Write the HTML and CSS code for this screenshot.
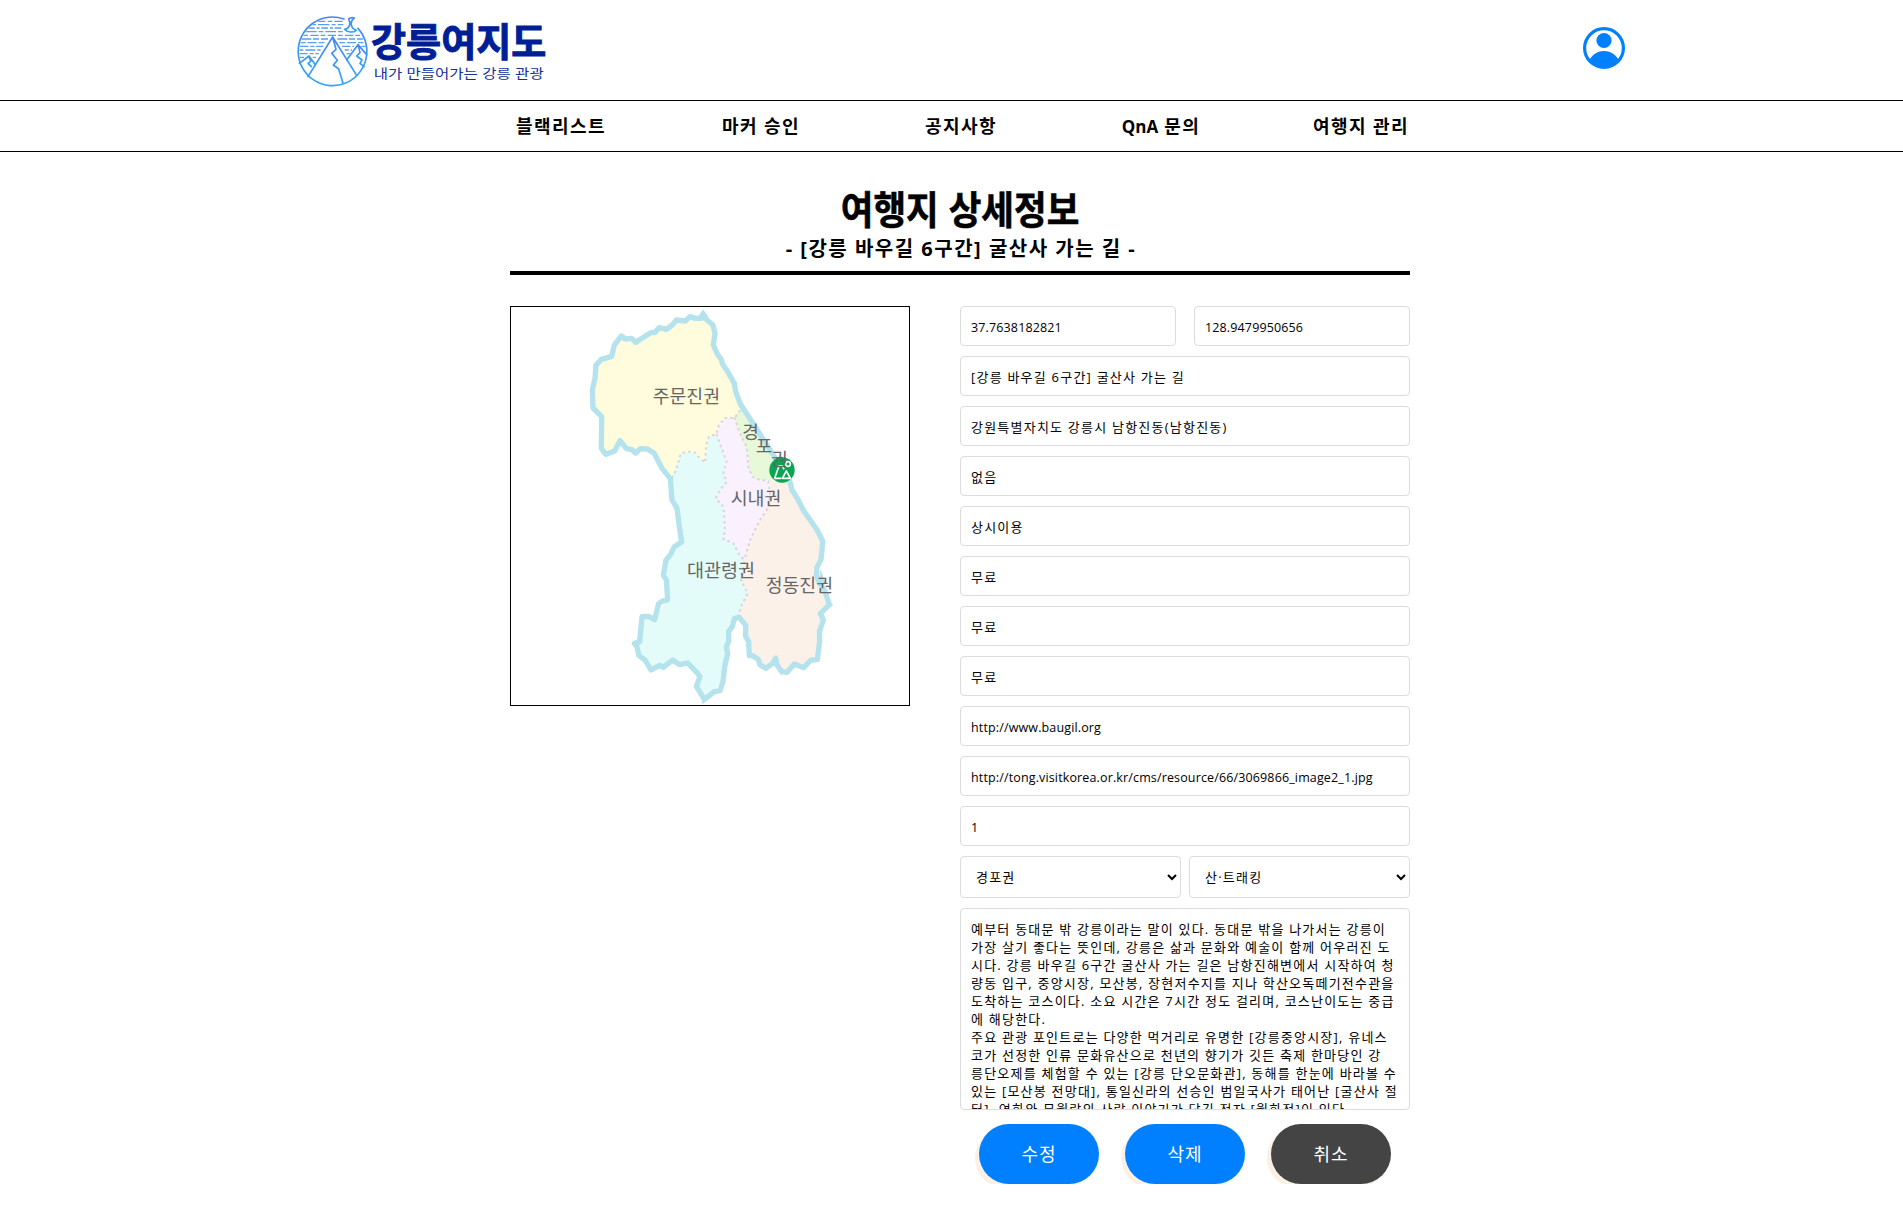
FILE: index.html
```html
<!DOCTYPE html>
<html lang="ko">
<head>
<meta charset="utf-8">
<title>강릉여지도</title>
<link rel="stylesheet" href="styles.css">
</head>
<body>
<header class="header">
  <svg class="logo" viewBox="0 0 870 300" role="img" aria-label="강릉여지도">
    <defs>
      <linearGradient id="ring" x1="0" y1="0" x2="0" y2="1"><stop offset="0" stop-color="#4a86ee"/><stop offset="1" stop-color="#2ea5fb"/></linearGradient>
      <clipPath id="disc"><circle cx="158" cy="154" r="100"/></clipPath>
    </defs>
    <g clip-path="url(#disc)" fill="none" stroke="#5a9df5" stroke-width="4">
      <path stroke-dasharray="26 7 14 6" d="M110 64H188"/>
      <path stroke-dasharray="12 6 34 7" d="M96 74H190"/>
      <path stroke-dasharray="20 6 9 5" d="M84 84H186"/>
      <path stroke-dasharray="32 6 14 6" d="M78 95H190"/>
      <path stroke-dasharray="14 7 25 6" d="M70 106H246"/>
      <path stroke-dasharray="30 5 18 6" d="M64 117H144M172 117H250"/>
      <path stroke-dasharray="17 6 27 6" d="M60 128H138M178 128H256"/>
      <path stroke-dasharray="25 6 12 5" d="M60 139H130M186 139H222M244 139H260"/>
      <path stroke-dasharray="12 6 30 6" d="M58 150H122M194 150H216"/>
      <path stroke-dasharray="25 6 12 5" d="M58 161H116M200 161H210"/>
      <path stroke-dasharray="14 6 20 5" d="M58 172H78M98 172H108"/>
    </g>
    <g fill="none" stroke="url(#ring)" stroke-width="5" stroke-linejoin="round" stroke-linecap="round">
      <path d="M192 57A103 103 0 1 0 234 85"/>
      <path d="M223 54C208 66 212 84 229 91C218 99 203 97 194 88C207 86 214 73 206 57C211 53 217 52 223 54Z"/>
      <path d="M84 230L158 111L230 226M158 111L168 148L155 160L172 181L160 195L176 207L189 250"/>
      <path d="M58 190L87 168L106 194M87 168L92 184L84 190L94 200M200 180L234 134L260 164M234 134L240 158L230 168L246 180L240 190L252 200"/>
    </g>
    <text class="logo-name" x="273" y="169" textLength="526" lengthAdjust="spacingAndGlyphs">강릉여지도</text>
    <text class="logo-tag" x="281" y="233" textLength="510" lengthAdjust="spacingAndGlyphs">내가 만들어가는 강릉 관광</text>
  </svg>
  <svg class="profile" viewBox="0 0 42 42" role="img" aria-label="프로필">
    <defs><clipPath id="face"><circle cx="21" cy="21" r="20"/></clipPath></defs>
    <circle cx="21" cy="21" r="19.4" fill="#fff" stroke="#0080ff" stroke-width="3.2"/>
    <circle cx="21" cy="13.5" r="7.6" fill="#0080ff"/>
    <path clip-path="url(#face)" fill="#0080ff" d="M5 36C8 28 14 24 21 24S34 28 37 36L30 42H12Z"/>
  </svg>
</header>
<nav class="nav">
  <a>블랙리스트</a><a>마커 승인</a><a>공지사항</a><a><span>QnA</span> 문의</a><a>여행지 관리</a>
</nav>
<main class="main">
  <div class="heading">
    <h1><span>여행지 상세정보</span></h1>
    <h2>- [강릉 바우길 6구간] 굴산사 가는 길 -</h2>
  </div>
  <div class="content">
    <div class="map">
      <svg viewBox="18 21 1194 1194">
        <path fill="#fffbdd" d="M594 42L627 75L625 135L650 185L690 255L708 320L690 350L650 360L634 405L612 410L600 488L560 455L528 460L500 535L445 455L392 460L345 422L302 465L290 450V350L262 315L272 190L322 165L350 105L392 125L465 82L515 60Z"/>
        <path fill="#e3fcfa" d="M500 535L528 460L560 455L600 488L612 410L634 402L665 480L655 520L665 545L634 590L655 620L657 715L690 735L718 780L708 840L728 880L700 945L670 1000L655 1145L598 1200L575 1155L585 1130L548 1088L505 1080L440 1110L400 1060L390 1030L412 950L450 955L488 900L478 830L485 780L530 725L500 590Z"/>
        <path fill="#f9f1fe" d="M634 402L655 358L688 352L730 470L742 530L790 545L795 612L765 660L735 720L718 785L685 730L655 715L657 625L632 595L665 545L655 520L665 485Z"/>
        <path fill="#e7f9d8" d="M708 325L688 352L705 400L730 470L735 515L750 537L795 543L840 520L800 465Z"/>
        <path fill="#fcf1e9" d="M795 543L855 545L885 600L955 720L950 770L935 800L945 850L973 915L950 945L940 1080L890 1100L830 1115L810 1080L780 1105L733 1065L728 1000L700 945L728 880L708 840L718 780L735 720L765 660L792 620Z"/>
        <g fill="none" stroke="#d8d6da" stroke-width="6" stroke-dasharray="8 9">
          <path d="M500 535C520 505 518 485 528 460L552 455L570 458L580 470L600 488L604 435L612 410L634 402L642 375L660 354H688L708 328"/>
          <path d="M634 402L648 440L665 485L655 520L665 545L645 570L632 595L655 620L660 690L655 717L685 730L703 765L718 780L708 840L728 880L710 915L700 945"/>
          <path d="M688 352L705 400L725 440L730 500L742 530L760 538L790 543L795 580L792 620L765 660L735 720L718 780"/>
        </g>
        <path fill="none" stroke="#b4e3ed" stroke-width="16" stroke-linejoin="round" d="M594 42L605 59L624 75L630 100L625 135L638 164L649 178L652 191L666 212L688 250L692 274L706 312L745 372L798 454L855 545L861 570L875 592L896 632L935 688L953 723L950 760L948 778L936 802L934 827L944 850L959 872L965 889L973 914L946 941L955 960L943 995L944 1023L937 1079L918 1080L896 1103L868 1092L846 1117L829 1114L816 1095L812 1074L803 1090L782 1105L765 1094L759 1077L742 1067H733L731 1025L722 1009V976L703 952L688 956L682 980L671 994V1025L664 1041L668 1060L659 1100L654 1145L645 1172L628 1175L598 1198L574 1159L585 1130L576 1118L548 1089L523 1094L503 1080L475 1102L464 1096L438 1110L420 1080L402 1067L396 1041L388 1030L404 1026L411 950L430 949L449 959L461 911L471 904L488 899L484 839L475 826L483 780L497 763L508 740L530 726L523 680L516 625L501 600L496 536L471 505L447 459L427 447L406 446L392 459L381 449L364 446L345 422L329 453L302 463L289 445L290 350L264 324L262 270L270 234L273 196L289 178L320 169L328 135L349 108L361 117L380 115L392 127L437 98L450 97L463 83L484 88L502 75L514 60L541 63L555 50L571 55L590 55Z"/>
        <path fill="#b4e3ed" d="M594 28L610 50H580ZM946 808L962 850L940 860ZM969 900L985 915L955 935ZM590 1190L592 1213L612 1198ZM825 1105L827 1127L840 1115ZM265 205V195L278 185Z"/>
        <g class="marker">
          <circle cx="831" cy="510" r="38" fill="#0aa553"/>
          <g fill="none" stroke="#fff" stroke-width="5" stroke-linejoin="round">
            <path d="M829 535H809L822 498H832L837 508M832 535L844 513L856 535Z"/>
            <circle cx="849" cy="492" r="7"/>
          </g>
        </g>
        <g class="map-label">
          <text x="443" y="308" textLength="202" lengthAdjust="spacingAndGlyphs">주문진권</text>
          <text x="712" y="418">경</text><text x="752" y="459">포</text><text x="799" y="499">권</text>
          <text x="677" y="616" textLength="152" lengthAdjust="spacingAndGlyphs">시내권</text>
          <text x="546" y="832" textLength="204" lengthAdjust="spacingAndGlyphs">대관령권</text>
          <text x="782" y="877" textLength="202" lengthAdjust="spacingAndGlyphs">정동진권</text>
        </g>
      </svg>
    </div>
    <form class="form">
      <div class="pair"><input class="latin" value="37.7638182821"><input class="latin" value="128.9479950656"></div>
      <input value="[강릉 바우길 6구간] 굴산사 가는 길">
      <input value="강원특별자치도 강릉시 남항진동(남항진동)">
      <input value="없음">
      <input value="상시이용">
      <input value="무료">
      <input value="무료">
      <input value="무료">
      <input class="latin" value="http://www.baugil.org">
      <input class="latin" value="http://tong.visitkorea.or.kr/cms/resource/66/3069866_image2_1.jpg">
      <input class="latin" value="1">
      <div class="selects">
        <select><option>경포권</option></select>
        <select><option>산·트래킹</option></select>
      </div>
      <textarea>예부터 동대문 밖 강릉이라는 말이 있다. 동대문 밖을 나가서는 강릉이
가장 살기 좋다는 뜻인데, 강릉은 삶과 문화와 예술이 함께 어우러진 도
시다. 강릉 바우길 6구간 굴산사 가는 길은 남항진해변에서 시작하여 청
량동 입구, 중앙시장, 모산봉, 장현저수지를 지나 학산오독떼기전수관을
도착하는 코스이다. 소요 시간은 7시간 정도 걸리며, 코스난이도는 중급
에 해당한다.
주요 관광 포인트로는 다양한 먹거리로 유명한 [강릉중앙시장], 유네스
코가 선정한 인류 문화유산으로 천년의 향기가 깃든 축제 한마당인 강
릉단오제를 체험할 수 있는 [강릉 단오문화관], 동해를 한눈에 바라볼 수
있는 [모산봉 전망대], 통일신라의 선승인 범일국사가 태어난 [굴산사 절
터], 연화와 무월랑의 사랑 이야기가 담긴 정자 [월화정]이 있다.</textarea>
      <div class="actions">
        <button type="button">수정</button><button type="button">삭제</button><button type="button" class="cancel">취소</button>
      </div>
    </form>
  </div>
</main>
</body>
</html>
```
FILE: styles.css
```css
* { box-sizing: border-box; }
html { overflow: hidden; }
body {
  width: 1920px;
  margin: 0;
  background: #fff;
  color: #000;
  font-family: "Open Sans", "Noto Sans CJK KR", sans-serif;
}
.header {
  display: flex;
  justify-content: space-between;
  align-items: flex-start;
  height: 100px;
  padding: 0 295px 0 280px;
}
.logo { width: 290px; height: 100px; }
.logo-name { font: 700 115px "Noto Sans CJK KR", sans-serif; fill: #001e96; stroke: #001e96; stroke-width: 3px; }
.logo-tag { font: 400 39px "Noto Sans CJK KR", sans-serif; fill: #14319c; }
.profile { width: 42px; height: 42px; margin-top: 27px; }
.nav {
  display: flex;
  justify-content: center;
  align-items: center;
  height: 52px;
  padding: 0 0 2px 2px;
  border-top: 1px solid #000;
  border-bottom: 1px solid #000;
}
.nav a {
  width: 200px;
  text-align: center;
  font-size: 18px;
  font-weight: 700;
  letter-spacing: 1.4px;
}
.nav span { font-size: 17px; letter-spacing: 0; }
.main { width: 900px; margin: 0 auto; }
.heading {
  height: 123px;
  border-bottom: 4px solid #000;
  text-align: center;
}
h1 { margin: 0; padding-top: 33px; font: 700 39px/44px "Noto Sans CJK KR", sans-serif; }
h1 span { display: inline-block; transform: scaleX(.91); -webkit-text-stroke: .6px #000; }
h2 { margin: 8px 0 0; padding-left: 2px; font-size: 20px; line-height: 24px; font-weight: 700; letter-spacing: 1.5px; }
.content { display: flex; justify-content: space-between; align-items: flex-start; padding-top: 31px; }
.map { width: 400px; height: 400px; border: 1px solid #000; }
.map svg { display: block; width: 398px; height: 398px; }
.map-label { font: 400 54px "Noto Sans CJK KR", sans-serif; fill: #666; }
.form { display: flex; flex-direction: column; gap: 10px; width: 450px; }
.form input, .form select, .form textarea {
  border: 1px solid #dcdcdc;
  border-radius: 4px;
  background: #fff;
  color: #000;
  font: 400 13px "Open Sans", "Noto Sans CJK KR", sans-serif;
  letter-spacing: 1.22px;
  outline: 0;
}
.form input { width: 100%; height: 40px; padding: 1px 10px; }
.form input.latin { padding-top: 3px; font-size: 12.5px; letter-spacing: .14px; }
.pair { display: grid; grid-template-columns: 216px 216px; justify-content: space-between; }
.selects { display: grid; grid-template-columns: 221px 221px; justify-content: space-between; }
.form select { height: 42px; padding: 0 0 0 11px; }
.form textarea {
  display: block;
  height: 202px;
  padding: 11px 10px;
  line-height: 18px;
  white-space: pre;
  overflow: hidden;
  resize: none;
}
.actions { display: flex; justify-content: center; gap: 26px; padding-top: 4px; }
.actions button {
  width: 120px;
  height: 60px;
  padding: 0 0 2px;
  border: 0;
  border-radius: 30px;
  background: #0080ff;
  box-shadow: -4px 4px 0 #fbf0e4;
  color: #fff;
  font: 400 18px "Noto Sans CJK KR", sans-serif;
  letter-spacing: 1px;
}
.actions .cancel { background: #444; }
```
